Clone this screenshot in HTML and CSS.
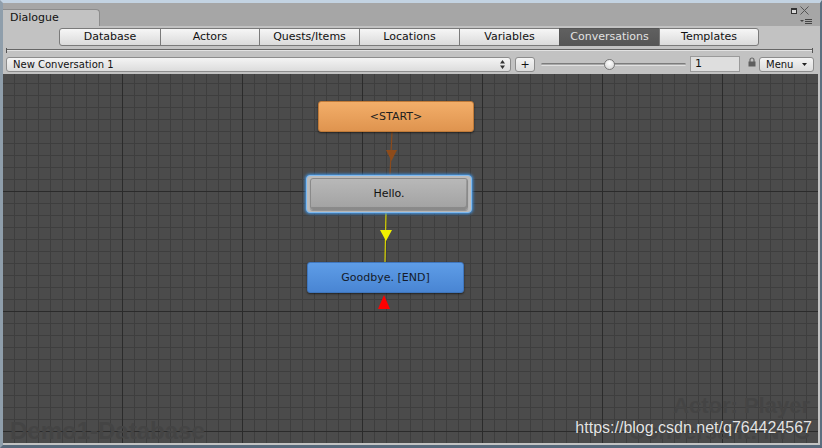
FILE: index.html
```
<!DOCTYPE html>
<html>
<head>
<meta charset="utf-8">
<link rel="stylesheet" href="styles.css">
</head>
<body>
<div class="window">
  <div class="titlebar">
    <div class="title-tab">Dialogue</div>
    <div class="win-controls">
      <div class="win-top">
        <svg class="ico-max" width="6" height="6" viewBox="0 0 6 6"><rect x="0.5" y="0.5" width="5" height="5" fill="#d8d8d8" stroke="#333" stroke-width="1"/><rect x="0.5" y="0.5" width="5" height="1.5" fill="#333"/></svg>
        <svg class="ico-close" width="9" height="9" viewBox="0 0 9 9"><path d="M0.5 0.5 L8.5 8.5 M8.5 0.5 L0.5 8.5" stroke="#555" stroke-width="1"/></svg>
      </div>
      <svg class="ico-menu" width="12" height="5" viewBox="0 0 12 5"><path d="M0 1 L4 1 L2 3 Z" fill="#444"/><path d="M5 0.5 H12 M5 2.5 H12 M5 4.5 H12" stroke="#444" stroke-width="1"/></svg>
    </div>
  </div>
  <div class="panel">
    <div class="tabs">
      <div class="tbtn first">Database</div>
      <div class="tbtn w100">Actors</div>
      <div class="tbtn">Quests/Items</div>
      <div class="tbtn">Locations</div>
      <div class="tbtn">Variables</div>
      <div class="tbtn active">Conversations</div>
      <div class="tbtn last w100">Templates</div>
    </div>
    <div class="sep"><span class="tick"></span><span class="sep-line"></span><span class="tick"></span></div>
    <div class="toolbar">
      <div class="dropdown"><span>New Conversation 1</span>
        <svg width="5" height="9" viewBox="0 0 5 9"><path d="M2.5 0 L5 3.5 L0 3.5 Z M2.5 9 L5 5.5 L0 5.5 Z" fill="#333"/></svg>
      </div>
      <div class="plus">+</div>
      <div class="slider"><div class="track"></div><div class="thumb"></div></div>
      <div class="numfield">1</div>
      <svg class="lock" width="8" height="10" viewBox="0 0 8 10"><path d="M2 5 V3 A2 2 0 0 1 6 3 V5" fill="none" stroke="#666" stroke-width="1.2"/><rect x="0.5" y="4.5" width="7" height="5" fill="#5e5e5e"/></svg>
      <div class="menu"><span>Menu</span><svg width="5" height="3" viewBox="0 0 5 3"><path d="M0 0 H5 L2.5 3 Z" fill="#222"/></svg></div>
    </div>
    <div class="canvas">
      <div class="wm-db">Demo1-Database</div>
      <div class="wm-info">Actor: Player<br>Conversant: NPC</div>
      <svg class="links" width="815" height="369" viewBox="0 0 815 369">
        <line x1="389" y1="58" x2="387" y2="101" stroke="#8a4a1c" stroke-width="1.2"/>
        <polygon points="383,76 394,76 388.5,87" fill="#8e4b1a"/>
        <line x1="383" y1="139" x2="382" y2="188" stroke="#d8d400" stroke-width="1.2"/>
        <polygon points="377,156 389,156 383,167" fill="#f0f000"/>
        <polygon points="381,221 375,235 387,235" fill="#ff0000"/>
      </svg>
      <div class="node start">&lt;START&gt;</div>
      <div class="node-sel"><div class="node hello">Hello.</div></div>
      <div class="node end">Goodbye. [END]</div>
      <div class="wm-url">https://blog.csdn.net/q764424567</div>
    </div>
  </div>
</div>
</body>
</html>
```
FILE: styles.css
```
* { box-sizing: border-box; }
html, body { margin: 0; padding: 0; }
body {
  width: 822px;
  height: 448px;
  overflow: hidden;
  background: #56687a;
  font-family: "DejaVu Sans", Verdana, sans-serif;
  color: #111;
}
.window {
  width: 822px;
  height: 448px;
  display: flex;
  flex-direction: column;
  background: #a6a6a6;
  border-top: 3px solid #c3d3e2;
  border-left: 3px solid #8f9eab;
  border-right: 2px solid #5d6f80;
  border-bottom: 3px solid #56687a;
}
.titlebar {
  height: 23px;
  display: flex;
  align-items: flex-end;
  justify-content: space-between;
}
.title-tab {
  width: 97px;
  height: 17px;
  background: #c2c2c2;
  border: 1px solid #8c8c8c;
  border-bottom: none;
  border-left: none;
  border-top-right-radius: 4px;
  font-size: 11px;
  line-height: 16px;
  padding-left: 7px;
  color: #111;
}
.win-controls {
  display: flex;
  flex-direction: column;
  align-items: flex-end;
  align-self: stretch;
  padding-top: 2px;
  padding-right: 8px;
}
.win-top { display: flex; align-items: center; gap: 3px; height: 10px; margin-right: 3px; }
.ico-max { margin-top: 2px; }
.ico-menu { margin-top: 4px; }
.panel {
  flex: 1;
  display: flex;
  flex-direction: column;
  background: #c2c2c2;
  padding-right: 2px;
  padding-bottom: 2px;
}
.tabs {
  display: flex;
  margin-top: 2px;
  padding-left: 56px;
  height: 18px;
}
.tbtn {
  width: 101px;
  height: 18px;
  margin-left: -1px;
  border: 1px solid #7a7a7a;
  background: linear-gradient(#f6f6f6, #dadada);
  font-size: 11px;
  line-height: 16px;
  text-align: center;
  color: #111;
}
.tbtn.w100 { width: 100px; }
.tbtn.first { width: 102px; margin-left: 0; border-radius: 3px 0 0 3px; }
.tbtn.last { border-radius: 0 3px 3px 0; }
.tbtn.active {
  background: linear-gradient(#606060, #565656);
  border-color: #555;
  color: #e2e2e2;
}
.sep {
  display: flex;
  align-items: center;
  height: 6px;
  margin: 1px 5px 3px 3px;
}
.tick { width: 1px; height: 5px; background: #555; }
.sep-line {
  flex: 1;
  height: 2px;
  border-top: 1px solid #666;
  border-bottom: 1px solid #e2e2e2;
}
.toolbar {
  display: flex;
  align-items: center;
  height: 16px;
  font-size: 10px;
}
.dropdown {
  margin-left: 3px;
  width: 505px;
  height: 15px;
  border: 1px solid #8c8c8c;
  border-radius: 3px;
  background: linear-gradient(#f4f4f4, #dcdcdc);
  display: flex;
  align-items: center;
  justify-content: space-between;
  padding: 0 5px 0 6px;
  color: #111;
}
.plus {
  margin-left: 4px;
  width: 20px;
  height: 15px;
  border: 1px solid #8c8c8c;
  border-radius: 3px;
  background: linear-gradient(#f4f4f4, #dcdcdc);
  text-align: center;
  line-height: 13px;
  font-size: 11px;
}
.slider {
  margin-left: 6px;
  width: 145px;
  height: 12px;
  display: flex;
  align-items: center;
  position: relative;
}
.track {
  width: 100%;
  height: 3px;
  background: #a8a8a8;
  border-top: 1px solid #7c7c7c;
  border-bottom: 1px solid #e0e0e0;
  border-radius: 2px;
}
.thumb {
  position: absolute;
  left: 63px;
  top: 1px;
  width: 11px;
  height: 11px;
  border-radius: 50%;
  border: 1px solid #777;
  background: radial-gradient(circle at 50% 35%, #ffffff, #d0d0d0);
}
.numfield {
  margin-left: 4px;
  width: 50px;
  height: 16px;
  border: 1px solid #9a9a9a;
  background: #dedede;
  padding-left: 4px;
  font-size: 11px;
  line-height: 14px;
}
.lock { margin-left: 8px; margin-top: -5px; }
.menu {
  margin-left: 3px;
  width: 55px;
  height: 15px;
  border: 1px solid #8c8c8c;
  border-radius: 3px;
  background: linear-gradient(#f4f4f4, #dcdcdc);
  display: flex;
  align-items: center;
  justify-content: space-between;
  padding: 0 6px 0 6px;
  font-size: 10px;
}
.canvas {
  margin-top: 2px;
  flex: 1;
  position: relative;
  overflow: hidden;
  background-color: #4b4b4b;
  background-image:
    linear-gradient(to right, #2b2b2b 1px, transparent 1px),
    linear-gradient(to bottom, #2b2b2b 1px, transparent 1px),
    linear-gradient(to right, #3e3e3e 1px, transparent 1px),
    linear-gradient(to bottom, #3e3e3e 1px, transparent 1px);
  background-size: 120px 120px, 120px 120px, 12px 12px, 12px 12px;
  background-position: 119px 117px, 119px 117px, 11px 9px, 11px 9px;
}
.links { position: absolute; left: 0; top: 0; }
.node {
  position: absolute;
  font-size: 11px;
  text-align: center;
  border-radius: 3px;
}
.start {
  left: 315px;
  top: 27px;
  width: 156px;
  height: 31px;
  line-height: 29px;
  background: linear-gradient(#f3ae69, #df944f);
  border: 1px solid #c07a38;
  box-shadow: 0 1px 2px rgba(0,0,0,0.55);
  color: #1e1e1e;
}
.node-sel {
  position: absolute;
  left: 303px;
  top: 101px;
  width: 166px;
  height: 38px;
  border-radius: 4px;
  background: #bcbcbc;
  border: 1px solid #7fbaf0;
  box-shadow: 0 0 3px 1px #3f95e6;
  padding: 2px 3px 2px 3px;
  display: flex;
}
.hello {
  position: static;
  flex: 1;
  line-height: 30px;
  background: linear-gradient(#b8b8b8, #a2a2a2);
  border: 1px solid #8a8a8a;
  box-shadow: inset -1px -2px 0 rgba(0,0,0,0.15), 0 1px 1px rgba(0,0,0,0.25);
  color: #111;
}
.end {
  left: 304px;
  top: 188px;
  width: 157px;
  height: 31px;
  line-height: 29px;
  background: linear-gradient(#5e9de7, #4985d3);
  border: 1px solid #3f76bd;
  box-shadow: 0 1px 2px rgba(0,0,0,0.55);
  color: #141b2a;
}
.wm-db {
  position: absolute;
  left: 7px;
  top: 345px;
  font-family: "Liberation Sans", Arial, sans-serif;
  font-weight: bold;
  font-size: 24px;
  line-height: 1;
  color: #444444;
}
.wm-info {
  position: absolute;
  right: 8px;
  top: 319px;
  text-align: right;
  font-family: "Liberation Sans", Arial, sans-serif;
  font-weight: bold;
  font-size: 22px;
  line-height: 26px;
  color: #444444;
}
.wm-url {
  position: absolute;
  right: 6px;
  top: 346px;
  font-family: "Liberation Sans", Arial, sans-serif;
  font-size: 16px;
  line-height: 1;
  color: #e4e4e4;
  text-shadow: 0 0 1px rgba(0,0,0,0.4);
}
```
